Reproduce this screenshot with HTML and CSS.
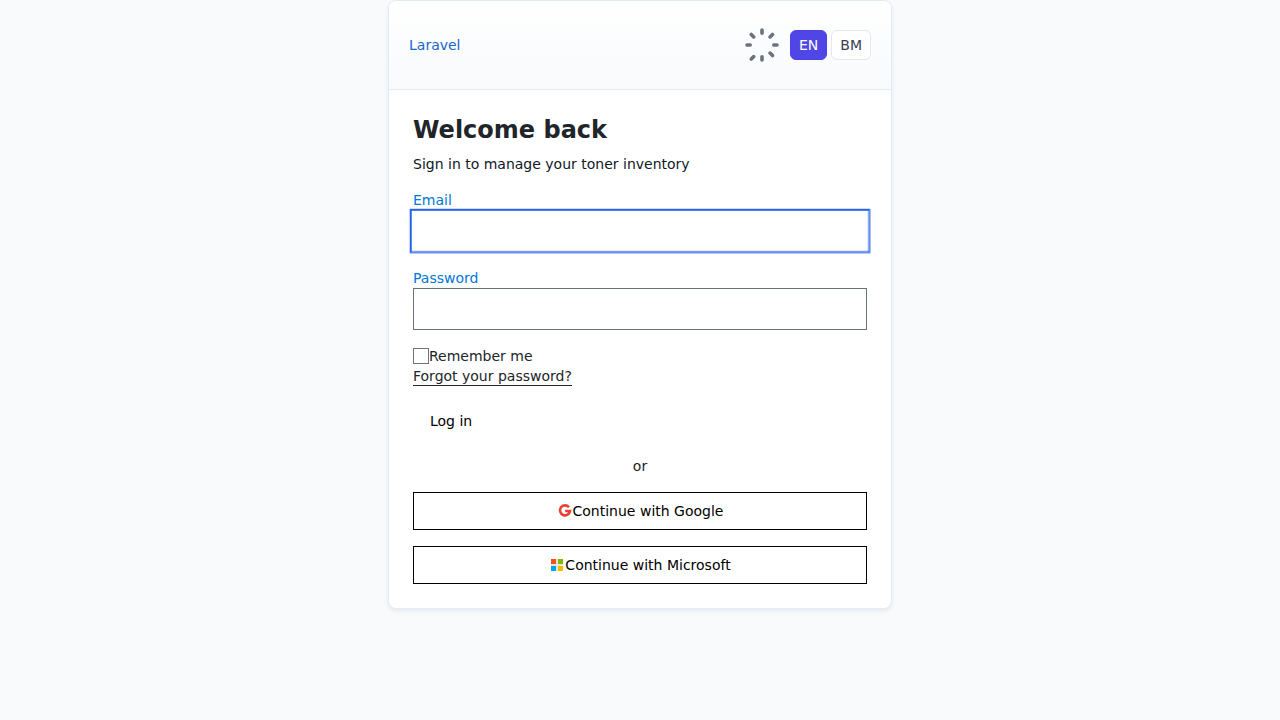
FILE: index.html
```html
<!DOCTYPE html>
<html lang="en">
<head>
<meta charset="utf-8">
<title>Laravel</title>
<link rel="stylesheet" href="styles.css">
</head>
<body>
<main class="card">
  <header class="card-header">
    <a class="brand">Laravel</a>
    <div class="tools">
      <svg class="spinner" width="36" height="36" viewBox="-18 -18 36 36" stroke="#6b7280" stroke-width="3.6" stroke-linecap="round">
        <path d="M0-15V-11.8M0 11.8V15M-15 0H-11.8M11.8 0H15M-10.7-10.5L-8.3-8.1M10.5-10.5L8.1-8.1M10.5 10.5L8.1 8.1M-10.7 14L-8.3 11.6"/>
      </svg>
      <a class="lang active">EN</a>
      <a class="lang">BM</a>
    </div>
  </header>
  <form class="card-body">
    <h1 class="title">Welcome back</h1>
    <p class="subtitle">Sign in to manage your toner inventory</p>
    <label class="label" for="email">Email</label>
    <input class="field focused" id="email" type="email">
    <label class="label" for="password">Password</label>
    <input class="field" id="password" type="password">
    <label class="remember"><input class="check" type="checkbox">Remember me</label>
    <a class="forgot">Forgot your password?</a>
    <button class="login" type="button">Log in</button>
    <div class="or">or</div>
    <a class="social">
      <svg width="16" height="14" viewBox="-1 0 16 14" fill="none" stroke="#ea4335" stroke-width="2.6"><path d="M11 3.3A5 5 0 1 0 12 7H7.1"/></svg>
      <span>Continue with Google</span>
    </a>
    <a class="social">
      <svg width="16" height="14" viewBox="-1 0 16 14"><path fill="#e4e9d5" d="M1 1h12v12H1z"/><path fill="#f25022" d="M1 1h5v5H1z"/><path fill="#7fba00" d="M8 1h5v5H8z"/><path fill="#00a4ef" d="M1 8h5v5H1z"/><path fill="#ffb900" d="M8 8h5v5H8z"/></svg>
      <span>Continue with Microsoft</span>
    </a>
  </form>
</main>
</body>
</html>
```

FILE: styles.css
```css
* { box-sizing: border-box; }
body {
  margin: 0;
  min-height: 720px;
  background: #f8fafc;
  color: #212529;
  font: 14px/20px "DejaVu Sans", sans-serif;
}
.card {
  width: 504px;
  height: 609px;
  margin: 0 auto;
  background: #fff;
  border: 1px solid #e2ecf8;
  border-radius: 8px;
  box-shadow: 0 2px 4px rgba(15, 50, 90, .08);
}
.card-header {
  display: flex;
  align-items: center;
  justify-content: space-between;
  height: 89px;
  padding: 0 20px;
  border-bottom: 1px solid #e2ecf8;
  border-radius: 7px 7px 0 0;
  background: linear-gradient(#fff, #f8fafc);
}
.brand { color: #1967c8; }
.tools { display: flex; align-items: center; gap: 4px; }
.spinner { margin-right: 6px; }
.lang {
  padding: 4px 8px;
  border: 1px solid #e5e7eb;
  border-radius: 6px;
  background: #fff;
  color: #374151;
}
.lang.active { background: #4f46e5; border-color: #4c43e0; color: #fff; }
.card-body { display: flex; flex-direction: column; padding: 24px; }
.title { margin: 0; font-size: 24px; line-height: 32px; }
.subtitle { margin: 8px 0 16px; color: #111827; }
.label { color: #0078d4; }
.field {
  height: 42px;
  margin: 0 0 16px;
  padding: 8px 12px;
  border: 1px solid #6b7280;
  background: #fff;
  font: inherit;
  outline: 0;
}
.focused {
  border-color: #2563eb;
  box-shadow: 0 0 0 1px #2563eb;
  transform: scale(1.01);
  will-change: transform;
}
.remember { display: flex; align-items: center; }
.check {
  appearance: none;
  width: 16px;
  height: 16px;
  margin: 0;
  border: 1px solid #6b7280;
  background: #fff;
}
.forgot {
  align-self: flex-start;
  height: 20px;
  border-bottom: 1px solid #212529;
}
.login {
  align-self: flex-start;
  margin: 15px 0 0;
  padding: 10px 17px;
  border: 0;
  background: none;
  color: #000;
  font: inherit;
}
.or { margin: 15px 0 16px; text-align: center; }
.social {
  display: flex;
  align-items: center;
  justify-content: center;
  height: 38px;
  margin-bottom: 16px;
  border: 1px solid #000;
  color: #000;
}
```
